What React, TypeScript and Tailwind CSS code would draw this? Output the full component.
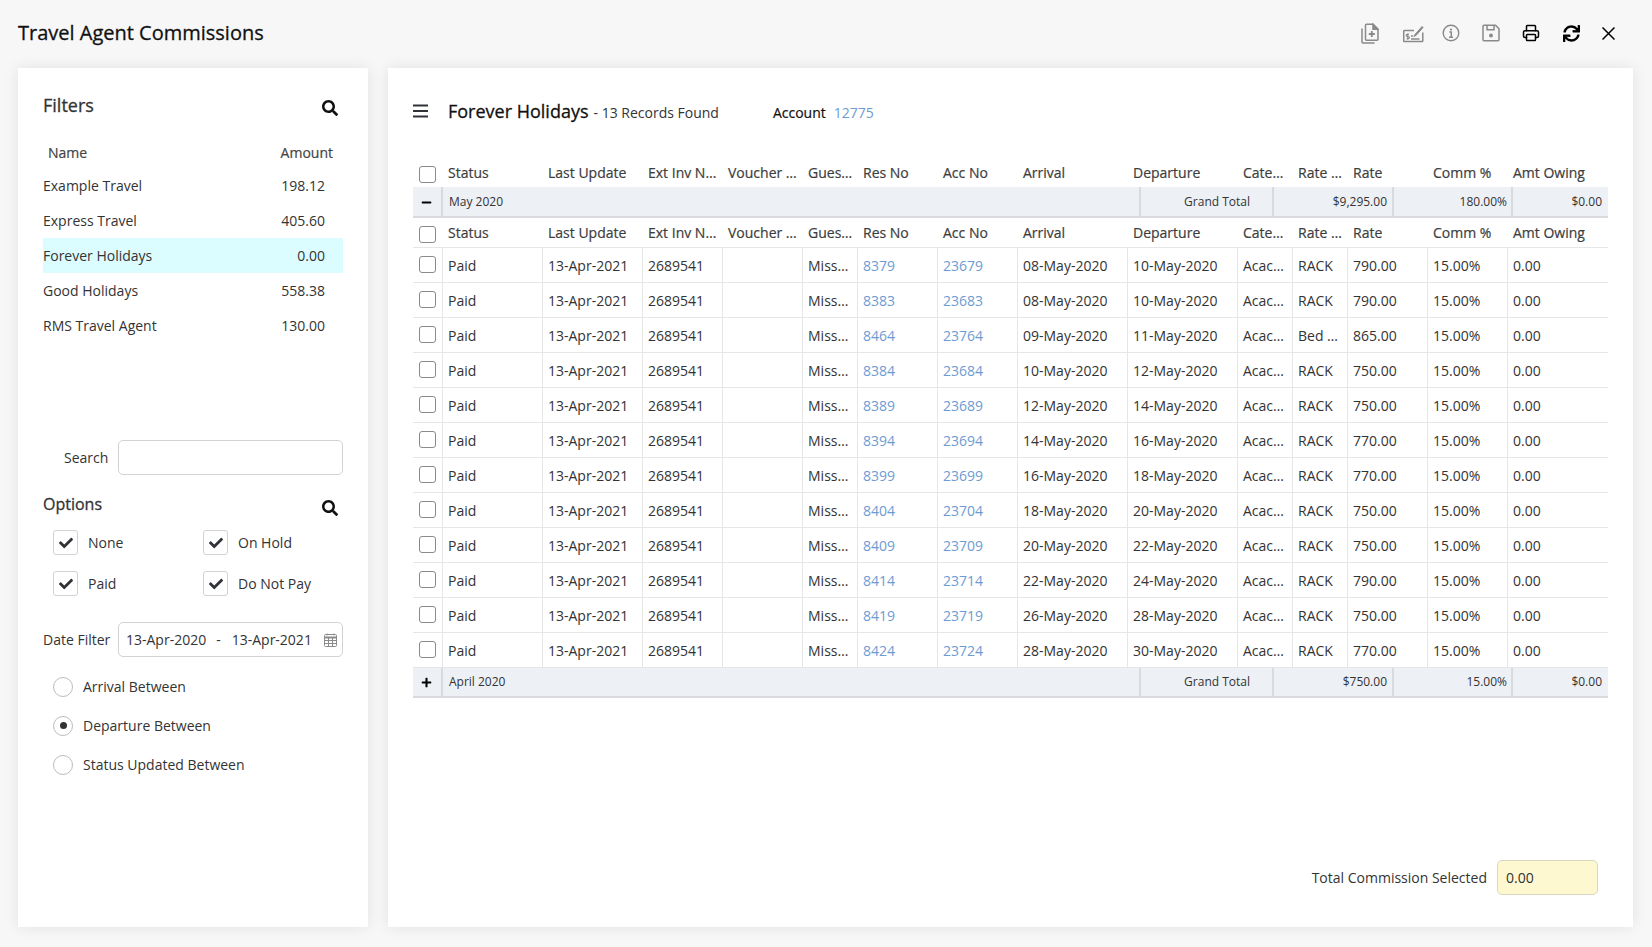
import React from "react";
import { FaSearch, FaCheck, FaSync, FaPlus, FaMinus } from "react-icons/fa";
import { Printer } from "lucide-react";

const COLS =
  "grid grid-cols-[30px_100px_100px_80px_80px_55px_80px_80px_110px_110px_55px_55px_80px_80px_100px]";
const GROUP_COLS = "grid grid-cols-[30px_698px_133px_120px_119px_95px]";

const HEAD = [
  "Status",
  "Last Update",
  "Ext Inv N…",
  "Voucher …",
  "Gues…",
  "Res No",
  "Acc No",
  "Arrival",
  "Departure",
  "Cate…",
  "Rate …",
  "Rate",
  "Comm %",
  "Amt Owing",
];

const RAW: [string, string, string, string, string, string][] = [
  ["8379", "23679", "08", "10", "RACK", "790.00"],
  ["8383", "23683", "08", "10", "RACK", "790.00"],
  ["8464", "23764", "09", "11", "Bed …", "865.00"],
  ["8384", "23684", "10", "12", "RACK", "750.00"],
  ["8389", "23689", "12", "14", "RACK", "750.00"],
  ["8394", "23694", "14", "16", "RACK", "770.00"],
  ["8399", "23699", "16", "18", "RACK", "770.00"],
  ["8404", "23704", "18", "20", "RACK", "750.00"],
  ["8409", "23709", "20", "22", "RACK", "750.00"],
  ["8414", "23714", "22", "24", "RACK", "790.00"],
  ["8419", "23719", "26", "28", "RACK", "750.00"],
  ["8424", "23724", "28", "30", "RACK", "770.00"],
];

const AGENTS = [
  ["Example Travel", "198.12"],
  ["Express Travel", "405.60"],
  ["Forever Holidays", "0.00"],
  ["Good Holidays", "558.38"],
  ["RMS Travel Agent", "130.00"],
];

const HEAVY = "[-webkit-text-stroke:0.3px]";
const HEAVY_SM = "[-webkit-text-stroke:0.2px]";

function RowCheck() {
  return <span className="block w-[17px] h-[17px] rounded-[3px] border border-[#8a8a8a] bg-white" />;
}

function HeaderRow({ first }: { first?: boolean }) {
  return (
    <div className={`${COLS} h-[30px] items-center text-[#3d3d3d] ${first ? "" : "border-b border-[#e6e6e6]"}`}>
      <div className="pl-[6px] flex items-center pt-[4px]">
        <RowCheck />
      </div>
      {HEAD.map((h) => (
        <div key={h} className={`pl-[5px] whitespace-nowrap ${HEAVY_SM}`}>
          {h}
        </div>
      ))}
    </div>
  );
}

function GroupRow({
  open,
  label,
  total,
  pct,
}: {
  open: boolean;
  label: string;
  total: string;
  pct: string;
}) {
  const inner = open ? "pt-[1px]" : "";
  const cell = `h-full flex items-center ${inner} border-r-2 border-[#d8dadd]`;
  return (
    <div
      className={`${GROUP_COLS} ${open ? "h-[31px]" : "h-[30px]"} bg-[#edf0f5] border-b-2 border-[#d8dadd] text-[12px] text-[#333]`}
    >
      <div className={`${cell} justify-center pr-[1px] text-black`}>
        {open ? <FaMinus size={11} /> : <FaPlus size={11} />}
      </div>
      <div className={`${cell} pl-[6px]`}>{label}</div>
      <div className={`${cell} justify-end pr-[22px]`}>Grand Total</div>
      <div className={`${cell} justify-end pr-[5px]`}>{total}</div>
      <div className={`${cell} justify-end pr-[4px]`}>{pct}</div>
      <div className={`h-full flex items-center ${inner} justify-end pr-[6px]`}>$0.00</div>
    </div>
  );
}

function DataRow({ r }: { r: (typeof RAW)[number] }) {
  const c = "h-full pl-[5px] flex items-center border-r border-[#e6e6e6] min-w-0 whitespace-nowrap";
  return (
    <div className={`${COLS} h-[35px] border-b border-[#e6e6e6] text-[#333]`}>
      <div className="h-full pl-[6px] pb-[1px] flex items-center border-r border-[#e6e6e6]">
        <RowCheck />
      </div>
      <div className={c}>Paid</div>
      <div className={c}>13-Apr-2021</div>
      <div className={c}>2689541</div>
      <div className={c} />
      <div className={c}>Miss…</div>
      <div className={`${c} text-[#6e9bd4]`}>{r[0]}</div>
      <div className={`${c} text-[#6e9bd4]`}>{r[1]}</div>
      <div className={c}>{r[2]}-May-2020</div>
      <div className={c}>{r[3]}-May-2020</div>
      <div className={c}>Acac…</div>
      <div className={c}>{r[4]}</div>
      <div className={c}>{r[5]}</div>
      <div className={c}>15.00%</div>
      <div className="h-full pl-[5px] flex items-center">0.00</div>
    </div>
  );
}

function CheckOption({ label }: { label: string }) {
  return (
    <div className="flex items-center gap-[10px] h-[25px]">
      <span className="w-[25px] h-[25px] rounded-[3px] border border-[#d2d2d2] flex items-center justify-center text-[#2f3338]">
        <FaCheck size={14} />
      </span>
      <span>{label}</span>
    </div>
  );
}

function Radio({ label, on }: { label: string; on?: boolean }) {
  return (
    <div className="flex items-center gap-[10px] h-[39px] pl-[10px]">
      <span className="w-[20px] h-[20px] rounded-full border border-[#bdbdbd] flex items-center justify-center">
        {on && <span className="w-[7px] h-[7px] rounded-full bg-[#333]" />}
      </span>
      <span>{label}</span>
    </div>
  );
}

function CopyPlusIcon() {
  return (
    <svg width="18" height="21" viewBox="0 0 18 21" fill="none" stroke="#8a8a8a" strokeWidth="1.5">
      <path d="M4.5 2.2a1 1 0 0 1 1-1H12l5 5v10a1 1 0 0 1-1 1H5.500a1 1 0 0 1-1-1z" />
      <path d="M12 1.200v5h5z" fill="#8a8a8a" />
      <path d="M1 5.500V19a1 1 0 0 0 1 1h11.500" />
      <path d="M10.800 8v6M7.800 11h6" strokeWidth="1.8" />
    </svg>
  );
}

function ChequeIcon() {
  return (
    <svg width="21" height="19" viewBox="0 0 21 19" fill="none" stroke="#8a8a8a" strokeWidth="1.5">
      <path d="M11 6.500H1.500a.8.800 0 0 0-.8.800v9.500a.8.800 0 0 0 .8.800h17.500a.8.800 0 0 0 .8-.8V8.500" />
      <path d="M12 10.500l7-8 1 1-7 8-2.200.8z" fill="#8a8a8a" stroke="#8a8a8a" strokeWidth="1" />
      <path d="M6 10.300H4.300a1 1 0 0 0 0 2.200h1a1 1 0 0 1 0 2.200H3.500M4.800 9.300v6.400" strokeWidth="1.100" />
      <path d="M8 12h2M8 15h8.500" strokeWidth="1.400" />
    </svg>
  );
}

function InfoIcon() {
  return (
    <svg width="18" height="18" viewBox="0 0 18 18" fill="none" stroke="#8a8a8a" strokeWidth="1.400">
      <circle cx="9" cy="9" r="7.800" />
      <circle cx="9" cy="5.500" r="1.100" fill="#8a8a8a" stroke="none" />
      <path d="M7.300 8h2v5M7 13.200h4" strokeWidth="1.500" />
    </svg>
  );
}

function SaveIcon() {
  return (
    <svg width="18" height="18" viewBox="0 0 18 18" fill="none" stroke="#8a8a8a" strokeWidth="1.500">
      <path d="M1 2.300a1 1 0 0 1 1-1h11.500L17 4.800v11a1 1 0 0 1-1 1H2a1 1 0 0 1-1-1z" />
      <path d="M5 1.300v4.500h7V1.300" />
      <circle cx="9" cy="11.500" r="2" fill="#8a8a8a" stroke="none" />
    </svg>
  );
}

function MenuIcon() {
  return (
    <svg width="15" height="14" viewBox="0 0 15 14" fill="none" stroke="#2f3338" strokeWidth="1.900">
      <path d="M0 1.500h15M0 7h15M0 12.500h15" />
    </svg>
  );
}

function CloseIcon() {
  return (
    <svg width="13" height="13" viewBox="0 0 13 13" fill="none" stroke="#000" strokeWidth="1.500">
      <path d="M.5.500l12 12M12.500.500l-12 12" />
    </svg>
  );
}

function CalendarIcon() {
  return (
    <svg width="13" height="14" viewBox="0 0 13 14" fill="none" stroke="#8a8a8a" strokeWidth="1">
      <rect x=".5" y="1.500" width="12" height="12" rx="1" />
      <path d="M.5 4.500h12" strokeWidth="2" />
      <path d="M3 .5v2M10 .5v2M.5 7.500h12M.5 10.500h12M4.500 4.500v9M8.500 4.500v9" />
    </svg>
  );
}

export default function App() {
  return (
    <div className="h-[947px] w-[1652px] flex flex-col bg-[#f7f7f8] text-[14px] text-[#333] font-['Open_Sans',sans-serif] overflow-hidden">
      <header className="h-[68px] shrink-0 flex items-center pl-[18px] pr-[37px] pb-[2px]">
        <h1 className={`text-[20px] font-normal text-[#111] ${HEAVY}`}>Travel Agent Commissions</h1>
        <div className="ml-auto flex items-center">
          <span className="w-[18px] flex justify-center mr-[24px]"><CopyPlusIcon /></span>
          <span className="w-[21px] flex justify-center mr-[18px]"><ChequeIcon /></span>
          <span className="w-[18px] flex justify-center mr-[22px]"><InfoIcon /></span>
          <span className="w-[18px] flex justify-center mr-[22px]"><SaveIcon /></span>
          <span className="w-[18px] flex justify-center mr-[22px] text-black"><Printer size={22} strokeWidth={2} /></span>
          <span className="w-[18px] flex justify-center mr-[22px] text-black"><FaSync size={17} /></span>
          <span className="w-[13px] flex justify-center"><CloseIcon /></span>
        </div>
      </header>

      <main className="flex gap-[20px] pl-[18px]">
        <aside className="w-[350px] h-[859px] bg-white shadow-[0_0_14px_rgba(0,0,0,0.09)] pl-[25px] pr-[25px] pt-[22px]">
          <div className="h-[30px] flex items-center justify-between pr-[5px]">
            <span className={`text-[18px] ${HEAVY}`}>Filters</span>
            <FaSearch size={16} className="text-[#111] mt-[5px]" />
          </div>
          <div className={`h-[33px] mt-[15px] pt-[2px] flex items-center justify-between pl-[5px] pr-[10px] text-[#444] ${HEAVY_SM}`}>
            <span>Name</span>
            <span>Amount</span>
          </div>
          {AGENTS.map(([n, a], i) => (
            <div
              key={n}
              className={`h-[35px] flex items-center justify-between pr-[18px] ${i === 2 ? "bg-[#dcfdff]" : ""}`}
            >
              <span>{n}</span>
              <span>{a}</span>
            </div>
          ))}
          <div className="mt-[97px] h-[35px] flex items-center">
            <span className="w-[75px] pl-[21px]">Search</span>
            <div className="w-[225px] h-[35px] rounded-[5px] border border-[#d2d2d2] bg-white" />
          </div>
          <div className="mt-[14px] h-[30px] flex items-center justify-between pr-[5px]">
            <span className={`text-[16px] ${HEAVY}`}>Options</span>
            <FaSearch size={16} className="text-[#111] mt-[8px]" />
          </div>
          <div className="mt-[11px] pl-[10px] grid grid-cols-[150px_1fr] gap-y-[16px]">
            <CheckOption label="None" />
            <CheckOption label="On Hold" />
            <CheckOption label="Paid" />
            <CheckOption label="Do Not Pay" />
          </div>
          <div className="mt-[26px] h-[35px] flex items-center">
            <span className="w-[75px] whitespace-nowrap">Date Filter</span>
            <div className="w-[225px] h-[35px] rounded-[5px] border border-[#d2d2d2] bg-white flex items-center pl-[7px] pr-[5px]">
              <span>13-Apr-2020</span>
              <span className="ml-[10px]">-</span>
              <span className="ml-[11px]">13-Apr-2021</span>
              <span className="ml-auto flex"><CalendarIcon /></span>
            </div>
          </div>
          <div className="mt-[10px]">
            <Radio label="Arrival Between" />
            <Radio label="Departure Between" on />
            <Radio label="Status Updated Between" />
          </div>
        </aside>

        <section className="w-[1245px] h-[859px] bg-white shadow-[0_0_14px_rgba(0,0,0,0.09)] pl-[25px] pr-[25px] pt-[23px] pb-[32px] flex flex-col">
          <div className="h-[40px] flex items-center">
            <span className="w-[35px] flex"><MenuIcon /></span>
            <span className={`text-[18px] text-[#111] ${HEAVY}`}>Forever Holidays</span>
            <span className="ml-[5px] mt-[2px]">- 13 Records Found</span>
            <span className={`ml-[54px] mt-[2px] text-[#111] ${HEAVY_SM}`}>Account</span>
            <span className="ml-[8px] mt-[2px] text-[#6e9bd4]">12775</span>
          </div>

          <div className="mt-[26px]">
            <HeaderRow first />
            <GroupRow open label="May 2020" total="$9,295.00" pct="180.00%" />
            <HeaderRow />
            {RAW.map((r) => (
              <DataRow key={r[0]} r={r} />
            ))}
            <GroupRow open={false} label="April 2020" total="$750.00" pct="15.00%" />
          </div>

          <div className="mt-auto flex items-center justify-end pr-[10px]">
            <span>Total Commission Selected</span>
            <div className="ml-[10px] w-[101px] h-[35px] rounded-[5px] border border-[#d9d6c0] bg-[#fef8d0] flex items-center pl-[8px]">
              0.00
            </div>
          </div>
        </section>
      </main>
    </div>
  );
}
